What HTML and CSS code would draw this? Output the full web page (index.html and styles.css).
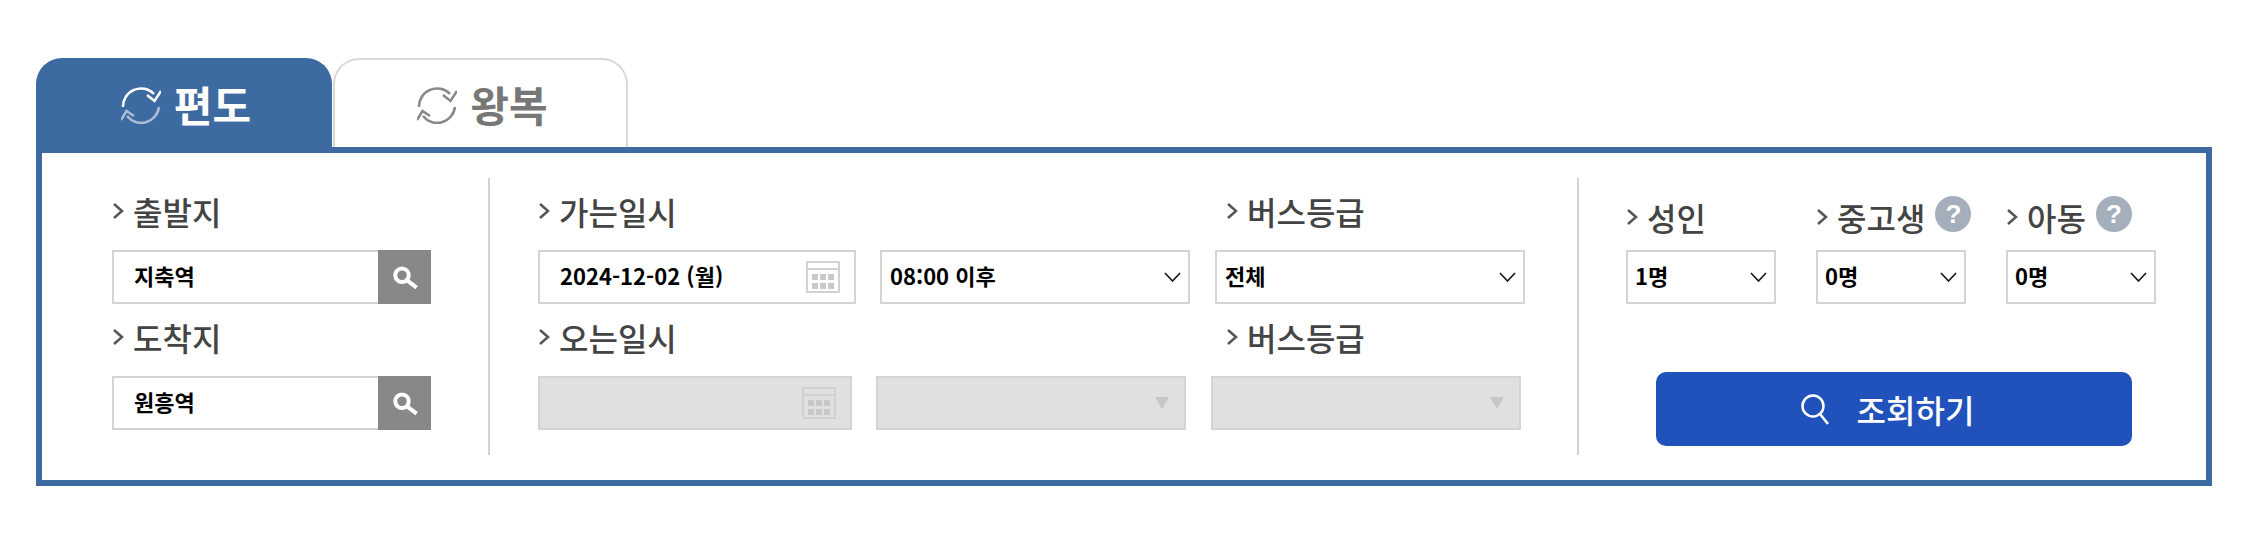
FILE: index.html
```html
<!DOCTYPE html>
<html lang="ko">
<head>
    <meta charset="UTF-8">
    <meta name="viewport" content="width=device-width, initial-scale=1.0">
    <title>버스 조회</title>
    <link rel="stylesheet" href="styles.css">
</head>
<body>
    <div class="search-wrap">
        <!-- Trip type tabs -->
        <div class="tabs">
            <div class="tab tab-on">
                <svg class="tab-icon" viewBox="0 0 40 38">
                    <path class="arc-main" d="M2 20A18 18 0 0 1 33 7"/>
                    <path class="arc-main" d="M40 4L33.500 14L26 8"/>
                    <path class="arc-dim" d="M38 20A18 18 0 0 1 6 29"/>
                    <path class="arc-dim" d="M0 33L5.500 24L13 29"/>
                </svg>
                <span>편도</span>
            </div>
            <div class="tab">
                <svg class="tab-icon" viewBox="0 0 40 38">
                    <path class="arc-main" d="M2 20A18 18 0 0 1 33 7"/>
                    <path class="arc-main" d="M40 4L33.500 14L26 8"/>
                    <path class="arc-main" d="M38 20A18 18 0 0 1 6 29"/>
                    <path class="arc-main" d="M0 33L5.500 24L13 29"/>
                </svg>
                <span>왕복</span>
            </div>
        </div>

        <div class="panel">
            <!-- Stations -->
            <div class="col col-station">
                <div class="label"><svg class="chev" viewBox="0 0 12 18"><path d="M2 2L10 9L2 16"/></svg>출발지</div>
                <div class="box box-station">
                    <span>지축역</span>
                    <div class="find-btn">
                        <svg viewBox="0 0 24 24"><circle cx="8" cy="10" r="6"/><path d="M12.500 14.500L21 21"/></svg>
                    </div>
                </div>
                <div class="label"><svg class="chev" viewBox="0 0 12 18"><path d="M2 2L10 9L2 16"/></svg>도착지</div>
                <div class="box box-station">
                    <span>원흥역</span>
                    <div class="find-btn">
                        <svg viewBox="0 0 24 24"><circle cx="8" cy="10" r="6"/><path d="M12.500 14.500L21 21"/></svg>
                    </div>
                </div>
            </div>

            <!-- Dates -->
            <div class="col col-date">
                <div class="label-row">
                    <div class="label"><svg class="chev" viewBox="0 0 12 18"><path d="M2 2L10 9L2 16"/></svg>가는일시</div>
                    <div class="label"><svg class="chev" viewBox="0 0 12 18"><path d="M2 2L10 9L2 16"/></svg>버스등급</div>
                </div>
                <div class="box-row">
                    <div class="box date-go">
                        <span>2024-12-02 (월)</span>
                        <svg class="cal" viewBox="0 0 34 32"><path class="cal-line" d="M1 1H33V31H1ZM1 8H33"/><path class="cal-dots" d="M6 13h6v6h-6zM14 13h6v6h-6zM22 13h6v6h-6zM6 22h6v6h-6zM14 22h6v6h-6zM22 22h6v6h-6z"/></svg>
                    </div>
                    <div class="box sel-wide">
                        <span>08:00 이후</span>
                        <svg class="sel-arrow" viewBox="0 0 17 10"><path d="M1 1L8.500 9L16 1"/></svg>
                    </div>
                    <div class="box sel-wide">
                        <span>전체</span>
                        <svg class="sel-arrow" viewBox="0 0 17 10"><path d="M1 1L8.500 9L16 1"/></svg>
                    </div>
                </div>
                <div class="label-row">
                    <div class="label"><svg class="chev" viewBox="0 0 12 18"><path d="M2 2L10 9L2 16"/></svg>오는일시</div>
                    <div class="label"><svg class="chev" viewBox="0 0 12 18"><path d="M2 2L10 9L2 16"/></svg>버스등급</div>
                </div>
                <div class="box-row">
                    <div class="box box-off date-back">
                        <svg class="cal" viewBox="0 0 34 32"><path class="cal-line" d="M1 1H33V31H1ZM1 8H33"/><path class="cal-dots" d="M6 13h6v6h-6zM14 13h6v6h-6zM22 13h6v6h-6zM6 22h6v6h-6zM14 22h6v6h-6zM22 22h6v6h-6z"/></svg>
                    </div>
                    <div class="box box-off sel-wide"><div class="off-arrow"></div></div>
                    <div class="box box-off sel-wide"><div class="off-arrow"></div></div>
                </div>
            </div>

            <!-- Passengers -->
            <div class="col col-people">
                <div class="people">
                    <div class="person">
                        <div class="label label-low"><svg class="chev" viewBox="0 0 12 18"><path d="M2 2L10 9L2 16"/></svg>성인</div>
                        <div class="box sel-small">
                            <span>1명</span>
                            <svg class="sel-arrow" viewBox="0 0 17 10"><path d="M1 1L8.500 9L16 1"/></svg>
                        </div>
                    </div>
                    <div class="person">
                        <div class="label label-low"><svg class="chev" viewBox="0 0 12 18"><path d="M2 2L10 9L2 16"/></svg>중고생<span class="help">?</span></div>
                        <div class="box sel-small">
                            <span>0명</span>
                            <svg class="sel-arrow" viewBox="0 0 17 10"><path d="M1 1L8.500 9L16 1"/></svg>
                        </div>
                    </div>
                    <div class="person">
                        <div class="label label-low"><svg class="chev" viewBox="0 0 12 18"><path d="M2 2L10 9L2 16"/></svg>아동<span class="help">?</span></div>
                        <div class="box sel-small">
                            <span>0명</span>
                            <svg class="sel-arrow" viewBox="0 0 17 10"><path d="M1 1L8.500 9L16 1"/></svg>
                        </div>
                    </div>
                </div>
                <button class="go-btn">
                    <svg viewBox="0 0 29 31"><circle cx="12" cy="12" r="10.500"/><path d="M19 20L27 30"/></svg>
                    <span>조회하기</span>
                </button>
            </div>
        </div>
    </div>
</body>
</html>
```

FILE: styles.css
```css
* {
    box-sizing: border-box;
}
body {
    margin: 0;
    background-color: #fff;
    font-family: "Noto Sans CJK KR", "Noto Sans", sans-serif;
}
.search-wrap {
    width: 2176px;
    margin: 58px 0 0 36px;
}

/* tabs */
.tabs {
    display: flex;
    gap: 1px;
}
.tab {
    width: 295px;
    height: 89px;
    display: flex;
    align-items: center;
    justify-content: center;
    gap: 13px;
    padding-left: 4px;
    border: 2px solid #d9d9d9;
    border-bottom: 0;
    border-radius: 26px 26px 0 0;
    color: #777;
    font-size: 42px;
    font-weight: 700;
    line-height: 1;
}
.tab-on {
    width: 296px;
    background-color: #3d6aa1;
    border-color: #3d6aa1;
    color: #fff;
}
.tab-icon {
    width: 40px;
    height: 38px;
    margin-top: 4px;
    fill: none;
    stroke: #888;
    stroke-width: 2.5;
}
.tab-on .arc-main {
    stroke: #fff;
}
.tab-on .arc-dim {
    stroke: #a9bdd5;
}

/* panel */
.panel {
    height: 339px;
    display: flex;
    padding: 25px 0;
    border: 6px solid #3d6aa1;
}
.col {
    height: 277px;
}
.col-station {
    width: 448px;
    padding-left: 70px;
    border-right: 2px solid #d2d2d2;
}
.col-date {
    width: 1089px;
    padding-left: 48px;
    border-right: 2px solid #d2d2d2;
}
.col-people {
    padding-left: 47px;
}

.label {
    display: flex;
    align-items: center;
    gap: 9px;
    height: 40px;
    margin: 13px 0 19px;
    color: #444;
    font-size: 32px;
    font-weight: 500;
    line-height: 40px;
    white-space: nowrap;
}
.label-low {
    margin: 19px 0 13px;
}
.chev {
    width: 12px;
    height: 18px;
    flex-shrink: 0;
    fill: none;
    stroke: #555;
    stroke-width: 2.5;
}
.label-row {
    display: grid;
    grid-template-columns: 688px auto;
}
.box-row {
    display: flex;
    gap: 24px;
}
.box-row .box + .box + .box {
    margin-left: 1px;
}

/* inputs and selects */
.box {
    height: 54px;
    display: flex;
    align-items: center;
    justify-content: space-between;
    border: 2px solid #d4d4d4;
    background-color: #fff;
    color: #000;
    font-size: 22px;
    font-weight: 700;
    line-height: 1;
}
.box span {
    margin-bottom: 5px;
}
.box-off {
    background-color: #e0e0e0;
    justify-content: flex-end;
}
.box-station {
    width: 319px;
    padding-left: 20px;
}
.find-btn {
    width: 53px;
    height: 54px;
    margin: -2px -2px -2px 0;
    padding-left: 3px;
    display: flex;
    align-items: center;
    justify-content: center;
    background-color: #888;
}
.find-btn svg {
    width: 27px;
    height: 27px;
    fill: none;
    stroke: #fff;
    stroke-width: 3.5;
}
.date-go {
    width: 318px;
    padding: 0 14px 0 20px;
}
.date-back {
    width: 314px;
    padding-right: 14px;
}
.cal {
    width: 34px;
    height: 32px;
}
.cal-line {
    fill: none;
    stroke: #d2d2d2;
    stroke-width: 2;
}
.cal-dots {
    fill: #c8c8c8;
}
.sel-wide {
    width: 310px;
    padding: 0 7px 0 8px;
}
.sel-small {
    width: 150px;
    padding: 0 7px 0 7px;
}
.sel-arrow {
    width: 17px;
    height: 10px;
    fill: none;
    stroke: #111;
    stroke-width: 1.6;
}
.off-arrow {
    width: 0;
    height: 0;
    margin-right: 8px;
    border-left: 7px solid transparent;
    border-right: 7px solid transparent;
    border-top: 12px solid #c6c6c6;
}

/* passengers */
.people {
    display: flex;
    gap: 40px;
}
.person {
    width: 150px;
}
.help {
    width: 36px;
    height: 36px;
    margin-left: 1px;
    margin-top: -1px;
    align-self: flex-start;
    flex-shrink: 0;
    border-radius: 50%;
    background-color: #a5aebb;
    color: #fff;
    font-family: "Liberation Sans", sans-serif;
    font-size: 26px;
    font-weight: 700;
    line-height: 36px;
    text-align: center;
}
.go-btn {
    width: 476px;
    height: 74px;
    margin: 68px 0 0 30px;
    padding: 0 13px 0 0;
    display: flex;
    align-items: center;
    justify-content: center;
    gap: 27px;
    border: 0;
    border-radius: 10px;
    background-color: #2152bb;
    color: #fff;
    font-family: inherit;
    font-size: 32px;
    font-weight: 500;
}
.go-btn svg {
    width: 29px;
    height: 31px;
    fill: none;
    stroke: #fff;
    stroke-width: 2.5;
}
```
